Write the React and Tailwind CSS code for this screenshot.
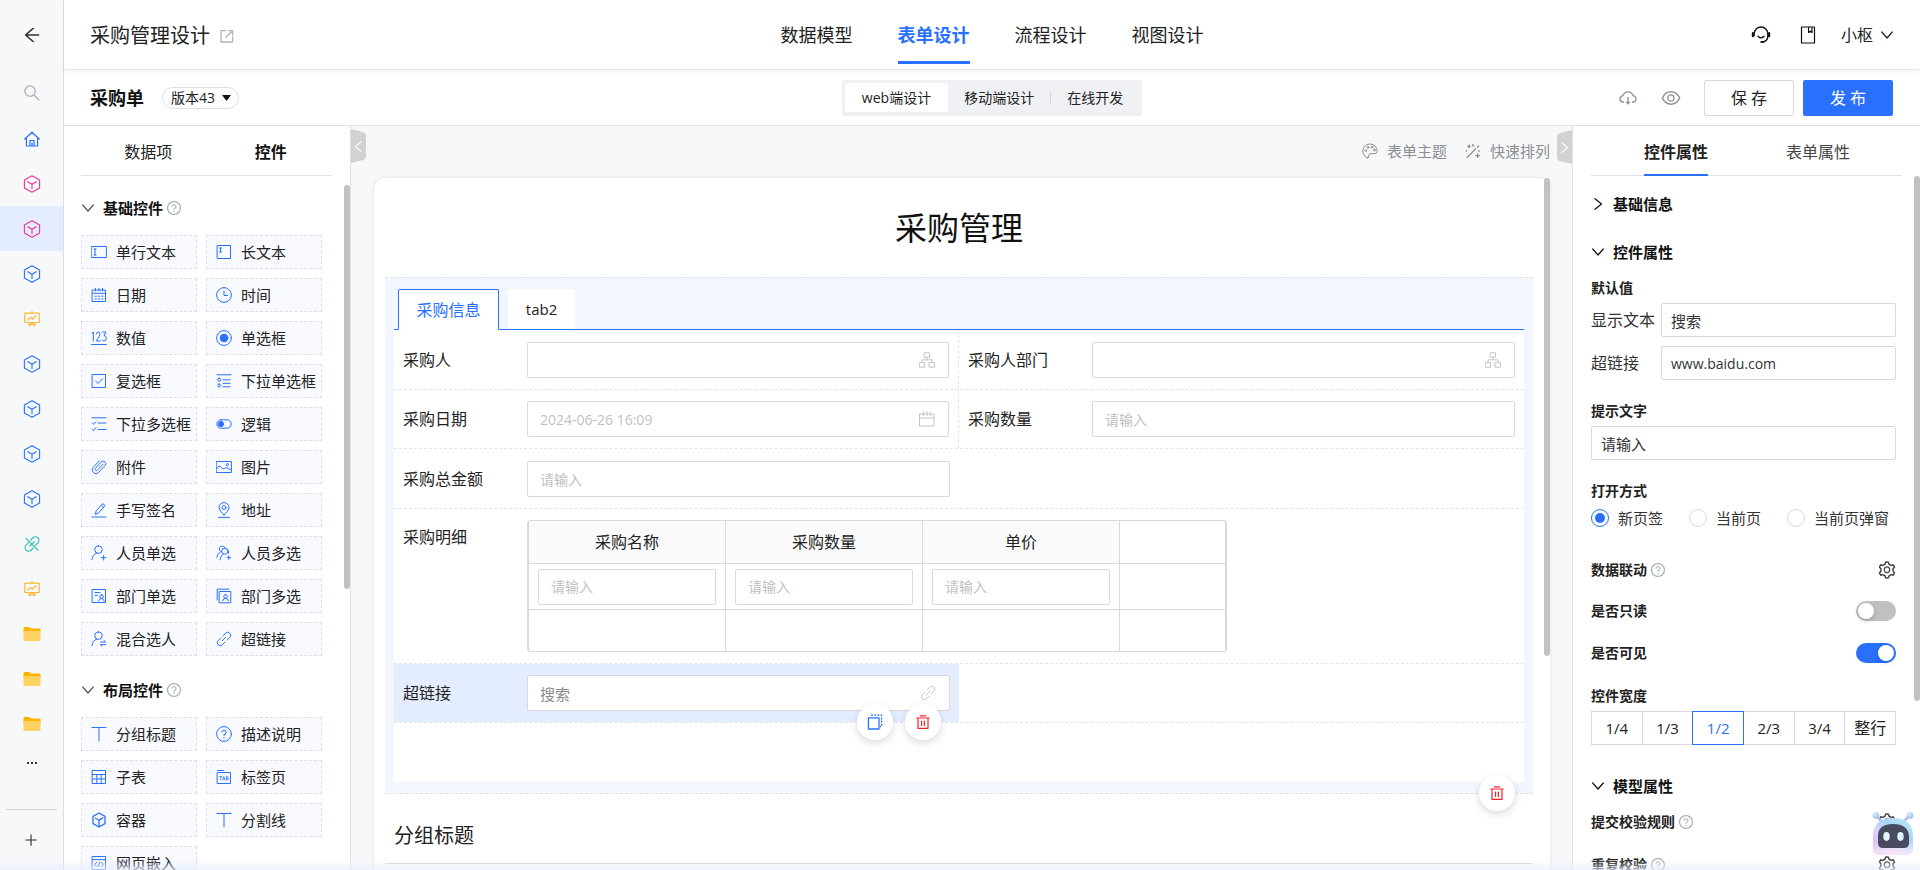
import React from "react";
import {
  AiOutlineArrowLeft,
  AiOutlineCloudDownload,
  AiOutlineEye,
  AiOutlinePlus,
  AiOutlineQuestionCircle,
  AiOutlineSearch,
  AiOutlineSetting,
} from "react-icons/ai";

function Svg({ className = "size-4", box = 16, sw = 1, children }) {
  return (
    <svg
      className={className}
      viewBox={`0 0 ${box} ${box}`}
      fill="none"
      stroke="currentColor"
      strokeWidth={sw}
      strokeLinejoin="round"
      strokeLinecap="round"
      aria-hidden="true"
    >
      {children}
    </svg>
  );
}

function Chevron({ dir = "down", className = "size-3" }) {
  const d = {
    down: "M0.7 3 6 9 11.3 3",
    right: "M3 0.7 9.5 6 3 11.3",
    left: "M9 0.7 2.5 6 9 11.3",
  }[dir];
  return (
    <Svg className={className} box={12} sw={1.2}>
      <path d={d} />
    </Svg>
  );
}

const cube = (
  <Svg className="size-[18px]" box={18} sw={1.1}>
    <path d="M9 .8 16.6 4.9V13.1L9 17.2 1.4 13.1V4.9ZM9 9.3V13.6M9 9.3 4.8 6.7M9 9.3 13.2 6.7" />
  </Svg>
);
const board = (
  <Svg className="size-4" sw={1.2}>
    <path d="M.8 2.2H15.2V11.5H.8ZM8 .6V2M4 9 6.6 6.4 8.4 8 12 4.8M8 11.5V13M5.2 15 8 12.8 10.8 15M4.6 13.2H11.4" />
  </Svg>
);
const home = (
  <Svg className="size-4" sw={1.2}>
    <path d="M.8 8 8 1.2 15.2 8M2.4 6.8V15H13.6V6.8M6 15V9.5H10V15M8 12V15" />
  </Svg>
);
const unlink = (
  <Svg className="size-4" sw={1.2}>
    <path d="M2 2.4 14 14M6.8 4 8.8 2A3.4 3.4 0 0 1 14 6.8L11.4 9.4M9.2 12 7.2 14A3.4 3.4 0 0 1 2 9.2L4.6 6.6M6 10 10.4 5.6" />
  </Svg>
);
const folder = (
  <svg className="size-[18px]" viewBox="0 0 18 18" aria-hidden="true">
    <path d="M.5 3A1 1 0 0 1 1.5 2H6.4L8 3.6H16.5A1 1 0 0 1 17.5 4.6V8H.5Z" fill="#ffb300" />
    <path d="M.5 6H17.5V15A1 1 0 0 1 16.5 16H1.5A1 1 0 0 1 .5 15Z" fill="#ffd262" />
  </svg>
);

const railItems = [
  { label: "首页", icon: home, tone: "text-[#2970ff]" },
  { label: "表单 1", icon: cube, tone: "text-[#f5318f]" },
  { label: "表单 2", icon: cube, tone: "text-[#f5318f]", active: true },
  { label: "表单 3", icon: cube, tone: "text-[#2970ff]" },
  { label: "看板 1", icon: board, tone: "text-[#ffb733]" },
  { label: "表单 4", icon: cube, tone: "text-[#2970ff]" },
  { label: "表单 5", icon: cube, tone: "text-[#2970ff]" },
  { label: "表单 6", icon: cube, tone: "text-[#2970ff]" },
  { label: "表单 7", icon: cube, tone: "text-[#2970ff]" },
  { label: "外链", icon: unlink, tone: "text-[#35bfb5]" },
  { label: "看板 2", icon: board, tone: "text-[#ffb733]" },
  { label: "文件夹 1", icon: folder, tone: "" },
  { label: "文件夹 2", icon: folder, tone: "" },
  { label: "文件夹 3", icon: folder, tone: "" },
];

function Rail() {
  return (
    <nav className="flex w-16 shrink-0 flex-col items-stretch border-r border-[#dcdee2] bg-[#f7f8fa]">
      <button aria-label="返回" className="flex h-[70px] shrink-0 items-center justify-center text-[#333]">
        <AiOutlineArrowLeft className="size-5" />
      </button>
      <button aria-label="搜索" className="flex h-[46px] shrink-0 items-center justify-center text-[#b5b8bd]">
        <AiOutlineSearch className="size-5" />
      </button>
      {railItems.map((it) => (
        <button
          key={it.label}
          aria-label={it.label}
          className={`flex h-[45px] shrink-0 items-center justify-center ${it.tone} ${it.active ? "bg-[#e4edff]" : ""}`}
        >
          {it.icon}
        </button>
      ))}
      <button aria-label="更多" className="flex h-[34px] shrink-0 items-center justify-center gap-[2px]">
        <span className="size-[2px] bg-[#333]" />
        <span className="size-[2px] bg-[#333]" />
        <span className="size-[2px] bg-[#333]" />
      </button>
      <div className="mx-[6px] mt-[29px] border-t border-[#d0d3d8]" />
      <button aria-label="新增" className="flex h-[60px] shrink-0 items-center justify-center pr-[2px] text-[#333]">
        <AiOutlinePlus className="size-4" />
      </button>
    </nav>
  );
}

function Header() {
  const tabs = ["数据模型", "表单设计", "流程设计", "视图设计"];
  return (
    <header className="relative z-10 grid h-[70px] shrink-0 grid-cols-[1fr_auto_1fr] border-b border-[#e4e5e8] bg-white shadow-[0_3px_6px_rgba(0,0,0,0.04)]">
      <div className="flex items-center gap-[10px] pl-[26px] pt-[2px]">
        <h1 className="text-[20px] leading-7 text-[#222]">采购管理设计</h1>
        <button aria-label="编辑" className="text-[#b5b5b5]">
          <Svg className="size-[14px]" box={14} sw={1.3}>
            <path d="M5.5 1.6H1V13H12.6V8M8.4 1.6H12.8V6M12.6 1.8 6 8.2" />
          </Svg>
        </button>
      </div>
      <nav className="flex items-end gap-[45px] pb-[5px]">
        {tabs.map((t, i) => (
          <a
            key={t}
            href="#"
            className={`flex h-[57px] items-start border-b-[3px] pt-[14px] text-[18px] leading-7 ${
              i === 1 ? "border-[#2970ff] font-bold text-[#2970ff]" : "border-transparent text-[#222]"
            }`}
          >
            {t}
          </a>
        ))}
      </nav>
      <div className="flex items-center justify-end pr-[27px] text-[#111]">
        <button aria-label="客服" className="mr-[28px]">
          <Svg className="size-5" box={20} sw={1.4}>
            <path d="M3.2 10.5V8.8A6.8 6.8 0 0 1 16.8 8.8V11.5A5.4 5.4 0 0 1 11.6 17M7 11.2Q10 14.6 13 11.2" />
            <path d="M1.9 8.2V11.2M18.1 8.2V11.2M10.4 17H12" strokeWidth="2.2" />
          </Svg>
        </button>
        <button aria-label="文档" className="mr-6">
          <Svg className="size-[18px]" box={18} sw={1.2}>
            <path d="M2.5 1H15.5V17H2.5ZM9.6 1V6.5L11.3 5.2 13 6.5V1" />
          </Svg>
        </button>
        <button className="flex items-center gap-2 text-base leading-6 text-[#222]">
          小枢
          <Chevron className="size-3" />
        </button>
      </div>
    </header>
  );
}

function SubHeader() {
  return (
    <div className="grid h-14 shrink-0 grid-cols-[1fr_auto_1fr] items-center border-b border-[#e0e2e6] bg-white">
      <div className="flex items-center gap-[18px] pl-[26px]">
        <h2 className="text-[18px] font-bold leading-6 text-[#111]">采购单</h2>
        <div className="relative flex items-center">
          <select
            aria-label="版本"
            className="h-[22px] w-[77px] appearance-none rounded-full border border-[#dcdfe6] bg-white pl-2 text-[14px] leading-5 text-[#222]"
          >
            <option>版本43</option>
          </select>
          <svg className="pointer-events-none absolute right-2 h-[6px] w-[9px]" viewBox="0 0 9 6" aria-hidden="true">
            <path d="M0 0H9L4.5 6Z" fill="#111" />
          </svg>
        </div>
      </div>
      <div className="flex h-9 items-center rounded-[3px] bg-[#f0f1f5] p-[3px] text-[14px] leading-5 text-[#222]">
        <button className="h-[29px] rounded-[2px] bg-white px-[17px]">web端设计</button>
        <button className="h-[29px] px-4">移动端设计</button>
        <span className="h-[13px] w-px bg-[#d4d6da]" />
        <button className="h-[29px] px-4">在线开发</button>
      </div>
      <div className="flex items-center justify-end pr-[27px]">
        <button aria-label="导出" className="mr-[22px] text-[#8f9399]">
          <AiOutlineCloudDownload className="size-5" />
        </button>
        <button aria-label="预览" className="mr-[22px] text-[#8f9399]">
          <AiOutlineEye className="size-[22px]" />
        </button>
        <button className="mr-[9px] h-9 w-[90px] rounded-[2px] border border-[#d9d9d9] bg-white text-base text-[#222]">
          保 存
        </button>
        <button className="h-9 w-[90px] rounded-[2px] bg-[#2970ff] text-base text-white">发 布</button>
      </div>
    </div>
  );
}

const linkPath = (
  <path d="M7 4.8 9.6 2.2A2.9 2.9 0 0 1 13.8 6.4L11.2 9M8.8 11.2 6.4 13.8A2.9 2.9 0 0 1 2.2 9.6L4.8 7M6.2 9.8 9.8 6.2" />
);

const basicWidgets = [
  ["单行文本", <path d="M.6 2.5H15.4V13.5H.6ZM3 5H5M4 5V11M3 11H5" />],
  ["长文本", <path d="M1.5 1.5H14.5V14.5H1.5ZM3.5 4H5.5M4.5 4V8M3.5 8H5.5" />],
  ["日期", <path d="M1.5 3H14.5V14.5H1.5ZM1.5 6.3H14.5M4.5 1.3V4M8 1.3V4M11.5 1.3V4M4 9.2H5.4M7.3 9.2H8.7M10.6 9.2H12M4 12H5.4M7.3 12H8.7M10.6 12H12" />],
  ["时间", <path d="M8 .6A7.4 7.4 0 1 1 8 15.4 7.4 7.4 0 1 1 8 .6ZM8 4V8.5H11.5" />],
  ["数值", <path d="M.5 14.5H15.5M1 3 2.3 2V11M5.2 4Q5.6 2 7.2 2 9 2 9 4.3 9 6 5.2 11H9.4M11.6 2H15L13 5.5Q15.4 5.8 15.4 8.2 15.4 11 13 11 11.8 11 11.3 10" />],
  ["单选框", <><circle cx="8" cy="8" r="7.4" /><circle cx="8" cy="8" r="3.8" fill="currentColor" /></>],
  ["复选框", <path d="M1.5 1.5H14.5V14.5H1.5ZM4.6 8 7.2 10.5 11.6 5.6" />],
  ["下拉单选框", <path d="M1 1.8H15M7 6.8H14M7 10.3H14M7 13.8H14M3.2 5.2A1.5 1.5 0 1 1 3.2 8.2 1.5 1.5 0 1 1 3.2 5.2ZM3.2 11A1.5 1.5 0 1 1 3.2 14 1.5 1.5 0 1 1 3.2 11Z" />],
  ["下拉多选框", <path d="M1 1.8H15M7 7H15M7 13.5H15M1.2 7 2.6 8.4 5 5.6M1.2 13 2.6 14.4 5 11.6" />],
  ["逻辑", <><rect x=".8" y="3.8" width="14.4" height="8.4" rx="4.2" /><circle cx="5" cy="8" r="2.6" fill="currentColor" /></>],
  ["附件", <path d="M12 5.2 6.4 11.2A1.3 1.3 0 0 1 4.4 9.4L10 3.2A2.5 2.5 0 0 1 14.2 6.4L7.6 13.4A3.6 3.6 0 0 1 2.2 8.4L8.4 1.8" />],
  ["图片", <><path d="M.6 2.5H15.4V13.5H.6ZM.8 9.5Q3 5.5 5.2 8.2 7 11 8.4 9.6 10 8 11.5 9.2L15.2 11" /><circle cx="11.4" cy="5.6" r="1.1" /></>],
  ["手写签名", <path d="M1 15H15M4.5 12 5.2 8.8 11.8 1.6 14 3.6 7.5 11ZM10.4 3.2 12.6 5.2" />],
  ["地址", <><path d="M2.5 15.4H13.5M8 13Q3 8.6 3 5.6A5 5 0 0 1 13 5.6Q13 8.6 8 13Z" /><circle cx="8" cy="5.6" r="2" /></>],
  ["人员单选", <path d="M7.5 1A3.6 3.6 0 1 1 7.5 8.4 3.6 3.6 0 1 1 7.5 1ZM1 14.6Q1.4 9.6 5.6 8.2M12.6 10.4V15M10.3 12.7H14.9" />],
  ["人员多选", <path d="M5.6 7A3 3 0 1 1 8.6 2.2M8.8 3A3 3 0 1 1 8.8 9.2 3 3 0 1 1 8.8 3ZM.8 12.4Q1 8.6 4 7.4M4 14.8Q4.2 10.6 7.2 9.2M11 4.2Q13 5 12.6 8M12.8 10.8V14.4M11 12.6H14.6" />],
  ["部门单选", <path d="M1.5 1.5H14.5V14.5H1.5ZM4 4.5H9M4 7.3H6.6M10.6 6.8A1.8 1.8 0 1 1 10.6 10.4 1.8 1.8 0 1 1 10.6 6.8ZM7.6 13Q8 10.6 10.6 10.6 13 10.6 13.2 13" />],
  ["部门多选", <path d="M1.2 12V1.2H13M3.5 3.5H14.8V14.8H3.5ZM9.5 6.6A1.8 1.8 0 1 1 9.5 10.2 1.8 1.8 0 1 1 9.5 6.6ZM6.6 12.8Q7 10.4 9.5 10.4 12 10.4 12.4 12.8" />],
  ["混合选人", <path d="M7.5 1A3.6 3.6 0 1 1 7.5 8.4 3.6 3.6 0 1 1 7.5 1ZM1 14.6Q1.4 9.6 5.6 8.2M9.4 11H14.6L13 9.6M14.6 13.6H9.4L11 15" />],
  ["超链接", linkPath],
];

const layoutWidgets = [
  ["分组标题", <path d="M1 1.5H15M8 1.5V15" />],
  ["描述说明", <><circle cx="8" cy="8" r="7.4" /><path d="M5.8 6.2A2.2 2.2 0 1 1 8 8.6V9.8M8 11.6V12" /></>],
  ["子表", <path d="M1.5 1.5H14.5V14.5H1.5ZM1.5 5.5H14.5M1.5 10H14.5M5.8 5.5V14.5M10.2 5.5V14.5" />],
  ["标签页", <><path d="M1.5 3.5H14.5V14.5H1.5ZM1.5 1.5H7.5" /><path d="M3.4 7.6H6M4.7 7.6V11M6.6 11 7.8 7.6 9 11M7 10H8.6M10.4 7.6V11H12Q13 10.2 11.8 9.3 12.8 8.2 11.8 7.6ZM10.4 9.3H11.8" strokeWidth=".7" /></>],
  ["容器", <path d="M8 1 14 4.4V11.6L8 15 2 11.6V4.4ZM8 8.3V15M8 8.3 4.6 6.2M8 8.3 11.8 5.9" strokeWidth="1.3" />],
  ["分割线", <path d="M1 1.5H15M8 1.5V15" />],
  ["网页嵌入", <path d="M1.5 1.5H14.5V14.5H1.5ZM1.5 4.6H14.5M5.6 7.4 3.8 9.4 5.6 11.4M10.4 7.4 12.2 9.4 10.4 11.4M8.8 7.2 7.2 11.6" />],
];

function Widgets({ items }) {
  return (
    <div className="grid auto-rows-[34px] grid-cols-2 gap-[9px] pr-7">
      {items.map(([label, drawing]) => (
        <button
          key={label}
          className="flex items-center gap-[9px] whitespace-nowrap border border-dashed border-[#d9e0ec] bg-[#f8faff] pl-[9px] text-[15px] leading-5 text-[#222]"
        >
          <span className="shrink-0 text-[#2970ff]">
            <Svg>{drawing}</Svg>
          </span>
          {label}
        </button>
      ))}
    </div>
  );
}

function SectionTitle({ children }) {
  return (
    <h3 className="flex h-6 items-center pl-px text-[15px] font-bold leading-6 text-[#111]">
      <span className="mr-[9px] text-[#555]">
        <Chevron className="size-3" />
      </span>
      {children}
      <AiOutlineQuestionCircle className="ml-[3px] size-4 text-[#a8abb0]" />
    </h3>
  );
}

function WidgetPanel() {
  return (
    <aside className="relative w-[287px] shrink-0 overflow-hidden border-r border-[#e0e2e6] bg-white pl-[17px]">
      <div className="mr-[18px] flex h-[50px] items-center border-b border-[#e0e2e6] pl-[6px] pt-[2px] text-base leading-6 text-[#222]">
        <button className="flex-1">数据项</button>
        <button className="flex-1 font-bold text-[#111]">控件</button>
      </div>
      <div className="pt-5">
        <SectionTitle>基础控件</SectionTitle>
        <div className="h-[15px]" />
        <Widgets items={basicWidgets} />
        <div className="h-[22px]" />
        <SectionTitle>布局控件</SectionTitle>
        <div className="h-[15px]" />
        <Widgets items={layoutWidgets} />
      </div>
      <div className="absolute right-0 top-[59px] h-[404px] w-[6px] rounded-full bg-[#c1c2c4]" />
    </aside>
  );
}

const orgIcon = (
  <Svg className="size-4" sw={1}>
    <path d="M5.5 .8H10.5V5.2H5.5ZM.6 10.6H5.6V15.2H.6ZM10.4 10.6H15.4V15.2H10.4ZM8 5.2V7.8M3 10.6V7.8H13V10.6" />
  </Svg>
);

const calendarIcon = (
  <Svg className="size-4" sw={1}>
    <path d="M1 3H15V15H1ZM1 7H15M4.6 .8V4.6M8 .8V4.6M11.4 .8V4.6" />
  </Svg>
);

function Field({ id, label, value, placeholder, icon, dim, children, className = "pt-3 pb-[11px]" }) {
  return (
    <div className={`relative flex items-center px-[9px] ${className}`}>
      <label htmlFor={id} className="w-[124px] shrink-0 text-base leading-6 text-[#222]">
        {label}
      </label>
      <div className="relative flex min-w-0 flex-1 items-center">
        <input
          id={id}
          readOnly
          defaultValue={value}
          placeholder={placeholder}
          className={`h-9 w-full rounded-[2px] border border-[#d9d9d9] bg-white px-3 placeholder:text-[#bfbfbf] ${
            dim ? "text-[14px] text-[#bfbfbf]" : value ? "text-[15px] text-[#8a8a8a]" : "text-[14px]"
          }`}
        />
        {icon && <span className="pointer-events-none absolute right-[14px] text-[#c4c4c4]">{icon}</span>}
      </div>
      {children}
    </div>
  );
}

function RoundButton({ label, tone, children }) {
  return (
    <button
      aria-label={label}
      className={`flex size-9 items-center justify-center rounded-full bg-white shadow-[0_3px_8px_rgba(0,0,0,0.15)] ${tone}`}
    >
      {children}
    </button>
  );
}

const trash = (
  <Svg className="size-[14px]" box={14} sw={1.2}>
    <path d="M.8 3H13.2M2 3V13.4H12V3M4.4 .8H9.6M5.6 6V10.6M8.4 6V10.6" />
  </Svg>
);

function DetailTable() {
  const cell = "border-r border-b border-[#d9d9d9]";
  const last = "border-b border-[#d9d9d9]";
  return (
    <table className="w-[700px] table-fixed border-separate border-spacing-0 rounded-[4px] border-x-2 border-t border-[#d9d9d9]">
      <thead>
        <tr className="h-[43px] text-base leading-6 text-[#222]">
          {["采购名称", "采购数量", "单价"].map((h) => (
            <th key={h} className={`w-[197px] bg-[#fafafa] font-normal ${cell}`}>
              {h}
            </th>
          ))}
          <th className={last} aria-label="操作" />
        </tr>
      </thead>
      <tbody>
        <tr className="h-[46px]">
          {["名称", "数量", "价格"].map((n) => (
            <td key={n} className={`px-[9px] ${cell}`}>
              <input
                aria-label={n}
                placeholder="请输入"
                className="block h-9 w-full rounded-[2px] border border-[#d9d9d9] px-3 text-[14px] placeholder:text-[#bfbfbf]"
              />
            </td>
          ))}
          <td className={last} />
        </tr>
        <tr className="h-[42px]">
          <td className={cell} />
          <td className={cell} />
          <td className={cell} />
          <td className={last} />
        </tr>
      </tbody>
    </table>
  );
}

function Handle({ dir }) {
  return (
    <button
      aria-label={dir === "left" ? "收起左栏" : "收起右栏"}
      className={`absolute flex h-[34px] w-[15px] items-center justify-center text-white ${
        dir === "left" ? "left-0 top-[3px]" : "right-0 top-1"
      }`}
    >
      <svg className="absolute inset-0 size-full" viewBox="0 0 15 34" preserveAspectRatio="none" aria-hidden="true">
        <path
          d={dir === "left" ? "M0 0 12 3Q15 4 15 7V27Q15 30 12 31L0 34Z" : "M15 0 3 3Q0 4 0 7V27Q0 30 3 31L15 34Z"}
          fill="#d2d2d2"
        />
      </svg>
      <span className="relative">
        <Chevron dir={dir} className="size-[11px]" />
      </span>
    </button>
  );
}

function Canvas() {
  const row = "grid grid-cols-2 border-b border-dashed border-[#e4e5e8]";
  return (
    <main className="relative flex min-w-0 flex-1 flex-col bg-[#f7f8fa] pl-[23px] pr-[22px]">
      <Handle dir="left" />
      <Handle dir="right" />
      <div className="flex h-[52px] shrink-0 items-center justify-end pb-[2px] text-[15px] leading-6 text-[#8c8e92]">
        <button className="mr-[18px] flex items-center gap-[9px]">
          <Svg className="size-4" sw={1}>
            <path d="M5.6 15Q6.8 15 6.6 13 6.6 10.6 9 10.6H13Q15.2 10.4 15.2 8A7.2 7.2 0 1 0 5.6 15Z" />
            <circle cx="3.8" cy="7.6" r=".9" />
            <circle cx="6" cy="4.4" r=".9" />
            <circle cx="10" cy="4.2" r=".9" />
            <circle cx="12.4" cy="7" r=".9" />
          </Svg>
          表单主题
        </button>
        <button className="flex items-center gap-[9px]">
          <Svg className="size-4" sw={1.3}>
            <path d="M2 14.6 10.6 6M12.4 4.2 13.6 3M12.6 11V14.4M10.9 12.7H14.3" />
            <path d="M4 2V4.6M2.7 3.3H5.3M8 1.6V3M7.3 2.3H8.7M14 7.6V8.6M1.4 7.4V8.2" />
          </Svg>
          快速排列
        </button>
      </div>
      <section className="relative flex-1 rounded-t-[10px] bg-white px-[11px] shadow-[0_0_3px_rgba(0,0,0,0.14)]">
        <h2 className="flex h-[99px] items-center justify-center pr-[6px] text-[32px] leading-10 text-[#111]">采购管理</h2>
        <div className="relative mr-[6px] border-y border-dashed border-[#e0e2e6] bg-[#f2f6ff] px-[9px] pb-[11px] pt-[11px]">
          <div className="flex gap-[9px] border-b border-[#2970ff] pl-1 text-base leading-6" role="tablist">
            <button
              role="tab"
              aria-selected="true"
              className="-mb-px h-[41px] w-[101px] rounded-t-[2px] border border-[#2970ff] border-b-white bg-white text-[#2970ff]"
            >
              采购信息
            </button>
            <button role="tab" aria-selected="false" className="h-10 w-[67px] rounded-t-[2px] bg-white text-[15px] text-[#222]">
              tab2
            </button>
          </div>
          <div className="bg-white">
            <div className={row}>
              <Field id="buyer" label="采购人" icon={orgIcon} className="border-r border-dashed border-[#e4e5e8] pt-3 pb-[11px]" />
              <Field id="dept" label="采购人部门" icon={orgIcon} />
            </div>
            <div className={row}>
              <Field
                id="date"
                label="采购日期"
                value="2024-06-26 16:09"
                dim
                icon={calendarIcon}
                className="border-r border-dashed border-[#e4e5e8] py-[11px]"
              />
              <Field id="count" label="采购数量" placeholder="请输入" className="py-[11px]" />
            </div>
            <div className={row}>
              <Field id="total" label="采购总金额" placeholder="请输入" />
            </div>
            <div className="flex border-b border-dashed border-[#e4e5e8] py-[11px] pl-[9px]">
              <div className="w-[124px] shrink-0 pt-[5px] text-base leading-6 text-[#222]">采购明细</div>
              <DetailTable />
            </div>
            <div className={row}>
              <Field
                id="link"
                label="超链接"
                value="搜索"
                icon={<Svg className="size-4">{linkPath}</Svg>}
                className="bg-[#e4edff] py-[11px]"
              >
                <div className="absolute -bottom-[18px] right-[18px] flex gap-3">
                  <RoundButton label="复制" tone="text-[#2970ff]">
                    <Svg className="size-4" sw={1.3}>
                      <path d="M1.4 3.8H12V15H1.4Z" />
                      <path d="M4 1.2H14.6V12.6H13" strokeDasharray="2 1.2" strokeLinecap="butt" />
                    </Svg>
                  </RoundButton>
                  <RoundButton label="删除" tone="text-[#f5222d]">
                    {trash}
                  </RoundButton>
                </div>
              </Field>
            </div>
            <div className="h-[59px]" />
          </div>
          <div className="absolute -bottom-[18px] right-[18px]">
            <RoundButton label="删除分组" tone="text-[#f5222d]">
              {trash}
            </RoundButton>
          </div>
        </div>
        <h3 className="mr-[6px] flex h-[70px] items-center border-b border-[#d9d9d9] pl-[9px] pt-[14px] text-[20px] leading-7 text-[#222]">
          分组标题
        </h3>
        <div className="absolute right-0 top-0 h-[478px] w-[6px] rounded-full bg-[#c1c2c4]" />
      </section>
    </main>
  );
}

function PropTitle({ dir = "down", className, children }) {
  return (
    <h3 className={`flex h-[30px] items-center gap-[9px] pl-px text-[15px] font-bold leading-6 text-[#111] ${className}`}>
      <Chevron dir={dir} className="size-3" />
      {children}
    </h3>
  );
}

function Toggle({ id, on }) {
  return (
    <input
      id={id}
      type="checkbox"
      role="switch"
      defaultChecked={on}
      className="h-5 w-10 appearance-none rounded-full bg-[#bfc0c2] p-[2px] before:block before:size-4 before:rounded-full before:bg-white before:shadow-[0_2px_4px_rgba(0,35,11,0.2)] before:content-[''] checked:bg-[#2970ff] checked:before:ml-5"
    />
  );
}

function Robot() {
  return (
    <svg className="h-[44px] w-[42px]" viewBox="0 0 42 44" aria-hidden="true">
      <defs>
        <linearGradient id="body" x1="0" y1="1" x2="1" y2="0">
          <stop offset="0" stopColor="#e0a8f2" />
          <stop offset=".35" stopColor="#d9d2fb" />
          <stop offset=".65" stopColor="#a9d4fb" />
          <stop offset="1" stopColor="#bfeef0" />
        </linearGradient>
        <linearGradient id="base" x1="0" y1="0" x2="0" y2="1">
          <stop offset=".6" stopColor="#fff" stopOpacity="0" />
          <stop offset="1" stopColor="#fbe9f6" stopOpacity=".85" />
        </linearGradient>
        <radialGradient id="ball" cx=".4" cy=".35" r=".8">
          <stop offset="0" stopColor="#dbe9ff" />
          <stop offset="1" stopColor="#8fb2ee" />
        </radialGradient>
      </defs>
      <path d="M5 4 9 9M37 4 32 9" stroke="#a9c0f0" strokeWidth="2.5" />
      <circle cx="4" cy="3.6" r="3.3" fill="url(#ball)" />
      <circle cx="38" cy="3.6" r="3.3" fill="url(#ball)" />
      <path d="M1 25Q1 6 21 6T41 25V36Q41 43 34 43H8Q1 43 1 36Z" fill="url(#body)" />
      <path d="M1 25Q1 6 21 6T41 25V36Q41 43 34 43H8Q1 43 1 36Z" fill="url(#base)" />
      <path d="M6 24Q6 12 21 12T37 24V31Q37 36 32 36H11Q6 36 6 31Z" fill="#484b60" />
      <ellipse cx="14.5" cy="24.5" rx="3.2" ry="4.4" fill="#e4f6ff" />
      <ellipse cx="28.5" cy="24.5" rx="3.2" ry="4.4" fill="#e4f6ff" />
    </svg>
  );
}

function PropsPanel() {
  const small = "text-[14px] font-bold leading-5 text-[#222]";
  const field = "h-[34px] w-full rounded-[2px] border border-[#d9d9d9] bg-white px-[9px] text-[#333]";
  const help = <AiOutlineQuestionCircle className="ml-[3px] size-4 text-[#a8abb0]" />;
  const gear = <AiOutlineSetting className="size-5 text-[#444]" />;
  return (
    <aside className="relative w-[348px] shrink-0 overflow-hidden border-l border-[#e0e2e6] bg-white pl-[18px]">
      <div className="mr-[18px] flex h-[50px] items-end gap-[78px] border-b border-[#e0e2e6] pl-[53px] text-base leading-6">
        <button className="-mb-px h-[47px] border-b-2 border-[#2970ff] font-bold text-[#222]">控件属性</button>
        <button className="-mb-px h-[47px] border-b-2 border-transparent text-[#444]">表单属性</button>
      </div>
      <div className="mr-6">
        <PropTitle dir="right" className="mt-[13px]">基础信息</PropTitle>
        <PropTitle className="mt-[18px]">控件属性</PropTitle>
        <div className={`mt-[11px] ${small}`}>默认值</div>
        <div className="mt-[5px] flex items-center text-base text-[#333]">
          <label htmlFor="text" className="w-[70px] shrink-0">显示文本</label>
          <input id="text" defaultValue="搜索" className={`text-[15px] ${field}`} />
        </div>
        <div className="mt-[9px] flex items-center text-base text-[#333]">
          <label htmlFor="url" className="w-[70px] shrink-0">超链接</label>
          <input id="url" defaultValue="www.baidu.com" className={`text-[14px] ${field}`} />
        </div>
        <label htmlFor="tip" className={`mt-[21px] block ${small}`}>提示文字</label>
        <input id="tip" defaultValue="请输入" className={`mt-[5px] block text-[15px] ${field}`} />
        <div className={`mt-[21px] ${small}`}>打开方式</div>
        <div className="mt-[7px] flex h-5 whitespace-nowrap text-[15px] leading-5 text-[#333]">
          {["新页签", "当前页", "当前页弹窗"].map((t, i) => (
            <label key={t} className="flex w-[98px] shrink-0 items-center gap-[9px]">
              <input
                type="radio"
                name="open"
                defaultChecked={i === 0}
                className="flex size-[18px] shrink-0 appearance-none items-center justify-center rounded-full border border-[#d9d9d9] checked:border-[#2970ff] checked:before:size-[10px] checked:before:rounded-full checked:before:bg-[#2970ff] checked:before:content-['']"
              />
              {t}
            </label>
          ))}
        </div>
        <div className={`mt-8 flex h-5 items-center ${small}`}>
          数据联动
          {help}
          <button aria-label="数据联动设置" className="-mr-px ml-auto">{gear}</button>
        </div>
        <div className="mt-[21px] flex h-5 items-center justify-between">
          <label htmlFor="readonly" className={small}>是否只读</label>
          <Toggle id="readonly" />
        </div>
        <div className="mt-[22px] flex h-5 items-center justify-between">
          <label htmlFor="visible" className={small}>是否可见</label>
          <Toggle id="visible" on />
        </div>
        <div className={`mt-[23px] ${small}`}>控件宽度</div>
        <div className="mt-[5px] flex h-[34px] pl-px text-[#222]">
          {["1/4", "1/3", "1/2", "2/3", "3/4", "整行"].map((t, i) => (
            <button
              key={t}
              className={`-ml-px flex-1 border leading-6 ${i === 5 ? "text-base" : "text-[15px]"} ${
                i === 2 ? "relative border-[#2970ff] text-[#2970ff]" : "border-[#d9d9d9]"
              }`}
            >
              {t}
            </button>
          ))}
        </div>
        <PropTitle className="mt-[26px]">模型属性</PropTitle>
        <div className={`mt-[11px] flex h-5 items-center ${small}`}>
          提交校验规则
          {help}
          <button aria-label="提交校验规则设置" className="-mr-px ml-auto">{gear}</button>
        </div>
        <div className={`mt-[23px] flex h-5 items-center ${small}`}>
          重复校验
          {help}
          <button aria-label="重复校验设置" className="-mr-px ml-auto">{gear}</button>
        </div>
      </div>
      <div className="absolute right-0 top-[50px] h-[525px] w-[6px] rounded-full bg-[#c1c2c4]" />
      <button aria-label="智能助手" className="absolute bottom-[14px] right-[6px]">
        <Robot />
      </button>
    </aside>
  );
}

export default function App() {
  return (
    <div className="relative flex h-screen overflow-hidden bg-white font-['Open_Sans','Noto_Sans_CJK_SC',sans-serif]">
      <Rail />
      <div className="flex min-w-0 flex-1 flex-col">
        <Header />
        <SubHeader />
        <div className="flex min-h-0 flex-1">
          <WidgetPanel />
          <Canvas />
          <PropsPanel />
        </div>
      </div>
      <div className="pointer-events-none absolute inset-x-0 bottom-0 h-[10px] bg-linear-to-b from-transparent to-[#e6eeff]/70" />
    </div>
  );
}
